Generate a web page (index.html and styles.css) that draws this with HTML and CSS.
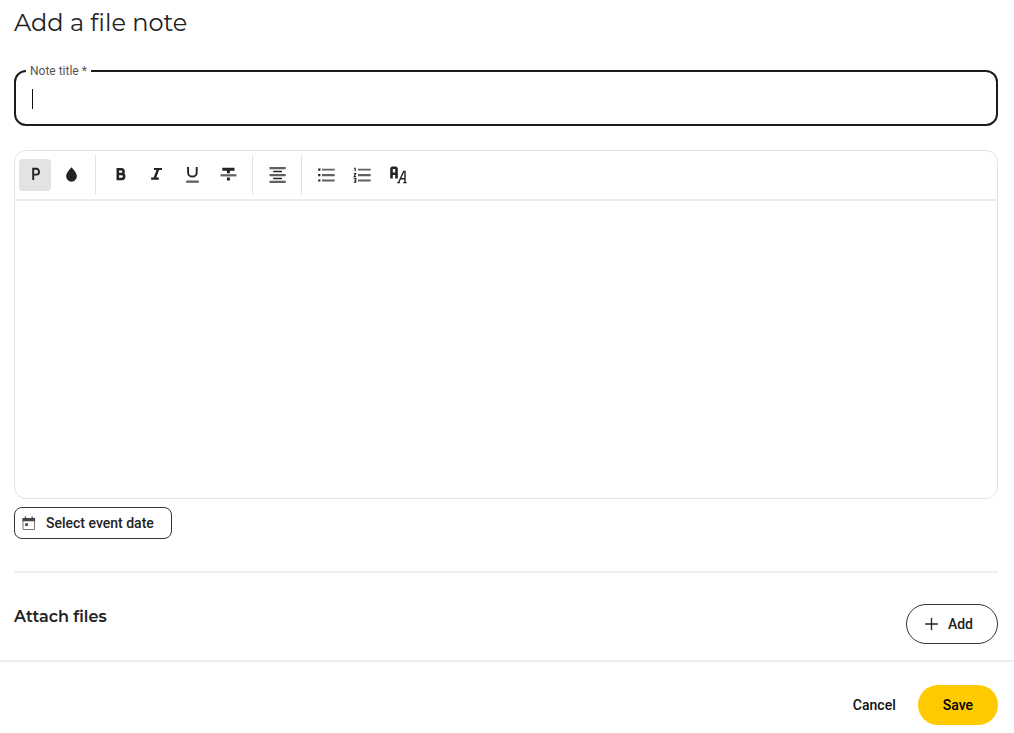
FILE: index.html
```html
<!DOCTYPE html>
<html lang="en">
<head>
<meta charset="utf-8">
<title>Add a file note</title>
<link rel="stylesheet" href="styles.css">
</head>
<body>
<form class="page">
  <main class="content">
    <h1 class="title">Add a file note</h1>
    <fieldset class="field">
      <legend class="field-legend"><label for="note-title">Note title *</label></legend>
      <div class="field-row">
        <span class="caret"></span>
        <input class="field-input" id="note-title" type="text" required>
      </div>
    </fieldset>

    <section class="editor">
      <div class="toolbar" role="toolbar" aria-label="Formatting">
        <div class="group">
          <button class="tool active" type="button" aria-label="Paragraph"><svg viewBox="0 0 32 32"><path class="line" d="M14.200 21V9.800h3.300a2.500 2.900 0 0 1 0 5.800h-3.300" stroke-width="1.900"/></svg></button>
          <button class="tool" type="button" aria-label="Colour"><svg viewBox="0 0 32 32"><path d="M16.500 8.300c2.700 3 5.400 6 5.400 9a5.400 5.400 0 0 1-10.800 0c0-3 2.700-6 5.400-9z"/></svg></button>
        </div>
        <div class="group">
          <button class="tool" type="button" aria-label="Bold"><svg viewBox="0 0 32 32"><path class="line" d="M13.800 10.300h3.500a2.300 2.400 0 0 1 0 4.800h-3.500M13.800 15.100h4a2.400 2.400 0 0 1 0 4.800h-4zM13.800 9v12" stroke-width="2.500"/></svg></button>
          <button class="tool" type="button" aria-label="Italic"><svg viewBox="0 0 32 32"><path d="M14 8.900h8v2.200h-2.900l-2.800 7.300h2.500v2.300h-7.700v-2.300h2.600l2.800-7.300H14z"/></svg></button>
          <button class="tool" type="button" aria-label="Underline"><svg viewBox="0 0 32 32"><path class="line" d="M12.100 8v5.400c0 5.500 8.600 5.500 8.600 0V8" stroke-width="1.900"/><path class="soft" d="M10.200 21.500h12.600v2.300H10.200z"/></svg></button>
          <button class="tool" type="button" aria-label="Strikethrough"><svg viewBox="0 0 32 32"><path d="M10.300 8.700h12.200v3h-4.600v2.500h-3v-2.500h-4.600zM14.900 18.500h3v3h-3z"/><path class="soft" d="M8.500 15.200h16v2.200h-16z"/></svg></button>
        </div>
        <div class="group">
          <button class="tool" type="button" aria-label="Align"><svg viewBox="0 0 32 32"><path class="soft" d="M8.500 8h16.200v2.200H8.500zM8.500 15h16.200v2.200H8.500zM8.500 21.700h16.200v2.300H8.500z"/><path d="M12.200 11.800h8.800v1.500h-8.800zM12.200 18.700h8.800v1.500h-8.800z"/></svg></button>
        </div>
        <div class="group">
          <button class="tool" type="button" aria-label="Bulleted list"><svg viewBox="0 0 32 32"><path class="soft" d="M12 9.700h12.700v1.900H12zM12 15h12.700v2.200H12zM12 20.500h12.700v1.900H12z"/><path d="M8.200 9.500h2.200v2.200H8.200zM8.200 15h2.200v2.200H8.200zM8.200 20.400h2.200v2.200H8.200z"/></svg></button>
          <button class="tool" type="button" aria-label="Numbered list"><svg viewBox="0 0 32 32"><path class="soft" d="M12 9.700h12.700v1.900H12zM12 15h12.700v2.200H12zM12 20.500h12.700v1.900H12z"/><path class="line" d="M8 9.300h1.200v3M7.800 14.600h2l-1.700 3h2M7.800 19.500h2v3.600h-2M8.300 21.300h1.500" stroke-width="1.100"/></svg></button>
          <button class="tool" type="button" aria-label="Clear formatting"><svg viewBox="0 0 32 32"><path class="line" d="M9.500 19.500V10q0-1.200 1.200-1.200h2.600q1.200 0 1.200 1.200v9.500M9.500 14.800h5" stroke-width="2.600"/><path class="line" d="M16.600 23.500l5.100-11h1.300v11M18.300 19.700h4.700M15.200 23.600h2.600M21.300 23.600h3.400" stroke-width="1.400"/></svg></button>
        </div>
      </div>
      <div class="editor-body" contenteditable="true" role="textbox" aria-label="Note"></div>
    </section>

    <button class="date-button" type="button">
      <svg class="calendar" viewBox="0 0 14 15"><path class="frame" d="M1 3.200h11.500v10.300H1z"/><path class="dark" d="M.5 2h12.600v3.300H.5zM2.800.6h1.300v2H2.800zM9.500.6h1.300v2H9.500zM3.200 7.200h2.700v2.700H3.200z"/></svg>
      Select event date
    </button>

    <section class="attach">
      <h2 class="attach-title">Attach files</h2>
      <button class="add-button" type="button">
        <svg class="plus" viewBox="0 0 14 14"><path class="line" d="M6.500 .7v12.600M.2 7h12.600" stroke-width="1.300"/></svg>
        Add
      </button>
    </section>
  </main>
  <footer class="footer">
    <button class="cancel" type="button">Cancel</button>
    <button class="save" type="submit">Save</button>
  </footer>
</form>
</body>
</html>
```
FILE: styles.css
```css
* { box-sizing: border-box; }

body {
  margin: 0;
  background: #fff;
  color: #222;
  font-family: Roboto, "Liberation Sans", sans-serif;
  font-size: 14px;
}

button {
  margin: 0;
  border: 0;
  background: none;
  color: inherit;
  font: 500 14px/20px Roboto, "Liberation Sans", sans-serif;
  cursor: pointer;
}

svg { display: block; fill: #222; }
.line { fill: none; stroke: #222; }
.soft { fill: #606060; }
.frame { fill: none; stroke: #777; }
.dark { fill: #444; }

.content {
  display: flex;
  flex-direction: column;
  padding: 7px 16px 16px 14px;
}

.title {
  margin: 0 0 24px;
  font: 400 24px/32px Montserrat, Inter, sans-serif;
}

.field {
  min-width: 0;
  margin: 0;
  padding: 0 16px;
  border: 2px solid #1c1c1c;
  border-radius: 12px;
}

.field-legend {
  margin-left: -6px;
  padding: 0 4px;
  color: #555;
  font-size: 12px;
  line-height: 16px;
}

.field-row {
  display: flex;
  align-items: center;
  height: 45px;
  padding-bottom: 5px;
}

.caret { width: 1px; height: 20px; background: #111; }

.field-input {
  flex: 1;
  min-width: 0;
  padding: 0;
  border: 0;
  outline: 0;
  background: none;
  font: 16px/24px Roboto, sans-serif;
}

.editor {
  margin: 24px 0 8px;
  border: 1px solid #e2e2e2;
  border-radius: 12px;
}

.toolbar {
  display: flex;
  padding: 4px;
  border-bottom: 2px solid #ededed;
}

.group { display: flex; gap: 4px; padding: 4px 8px; }
.group:first-child { padding-left: 0; }
.group + .group { border-left: 1px solid #e2e2e2; }

.tool { width: 32px; height: 32px; padding: 0; border-radius: 4px; }
.tool.active { background: #e3e3e3; }

.editor-body { min-height: 297px; padding: 16px; outline: 0; }

.date-button {
  display: flex;
  align-items: center;
  align-self: flex-start;
  gap: 10px;
  height: 32px;
  padding: 0 17px 0 7px;
  border: 1px solid #333;
  border-radius: 8px;
}

.calendar { width: 14px; height: 15px; }

.attach {
  display: flex;
  justify-content: space-between;
  align-items: flex-start;
  margin-top: 32px;
  padding-top: 31px;
  border-top: 2px solid #eee;
}

.attach-title {
  margin: 0;
  font: 600 16px/26px Montserrat, Inter, sans-serif;
}

.add-button {
  display: flex;
  align-items: center;
  gap: 9px;
  height: 40px;
  padding: 0 24px 0 18px;
  border: 1px solid #333;
  border-radius: 20px;
}

.plus { width: 14px; height: 14px; }

.footer {
  display: flex;
  justify-content: flex-end;
  gap: 6px;
  padding: 23px 16px 8px;
  border-top: 2px solid #eee;
}

.cancel, .save { height: 40px; border-radius: 20px; color: #111; }
.cancel { padding: 0 16px; }
.save { padding: 0 25px; background: #ffcb00; color: #000; }
```
